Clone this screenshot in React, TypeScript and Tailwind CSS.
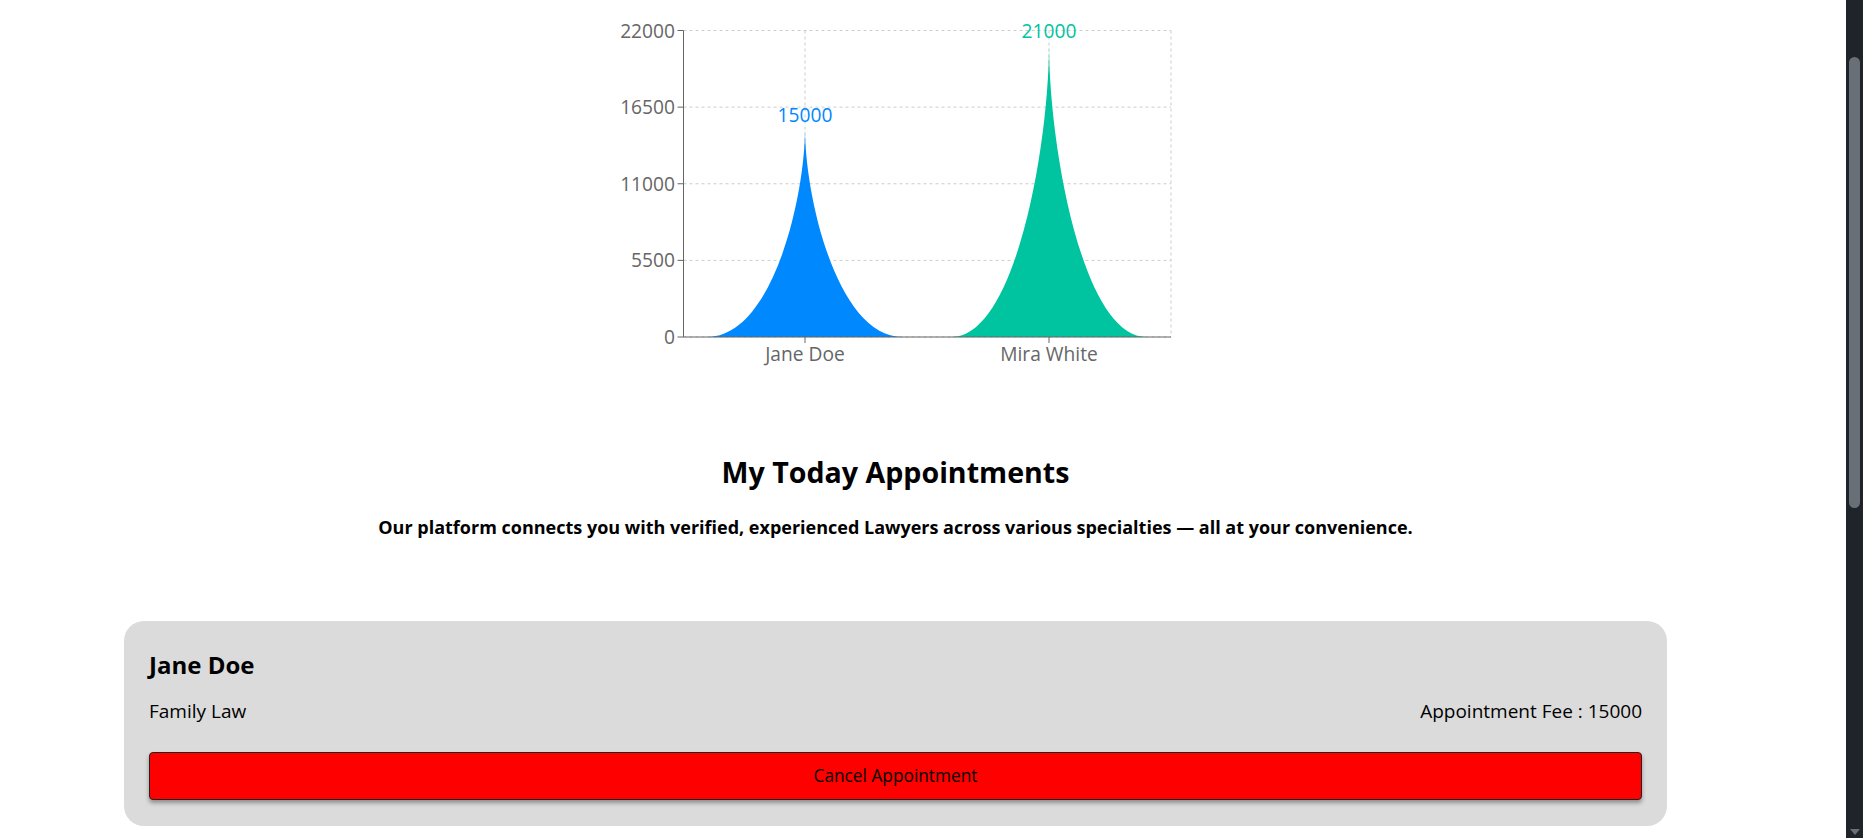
import React from "react";

const OX = 605;
const FONT = '"Open Sans", "Noto Sans", sans-serif';

function Chart() {
  const x0 = 682.5 - OX;
  const x1 = 1170 - OX;
  const yTop = 30.5;
  const yBot = 337;
  const ticks = [0, 5500, 11000, 16500, 22000];
  const yOf = (v: number) => yBot - (v / 22000) * (yBot - yTop);
  const bars = [
    { name: "Jane Doe", v: 15000, c: "#0088FE", cx: 804 - OX },
    { name: "Mira White", v: 21000, c: "#00C49F", cx: 1048 - OX },
  ];
  const bw = 195.2;
  const shape = (cx: number, v: number) => {
    const x = cx - bw / 2;
    const y = yOf(v);
    const h = yBot - y;
    const w = bw;
    return `M${x},${y + h}C${x + w / 3},${y + h} ${x + w / 2},${y + h / 3} ${x + w / 2},${y}C${x + w / 2},${y + h / 3} ${x + (2 * w) / 3},${y + h} ${x + w},${y + h}Z`;
  };
  return (
    <svg width={580} height={380} viewBox="0 0 580 380" style={{ fontFamily: FONT }}>
      {ticks.map((t) => (
        <line key={"h" + t} x1={x0} x2={x1} y1={yOf(t)} y2={yOf(t)} stroke="#ccc" strokeDasharray="3 3" />
      ))}
      {[...bars.map((b) => b.cx), x1].map((x, i) => (
        <line key={"v" + i} x1={x} x2={x} y1={yTop} y2={yBot} stroke="#ccc" strokeDasharray="3 3" />
      ))}
      {bars.map((b) => (
        <path key={b.name} d={shape(b.cx, b.v)} fill={b.c} />
      ))}
      <line x1={x0} x2={x0} y1={yTop} y2={yBot} stroke="#666" />
      <line x1={x0} x2={x1} y1={yBot} y2={yBot} stroke="#666" />
      {ticks.map((t) => (
        <g key={"t" + t}>
          <line x1={x0 - 6} x2={x0} y1={yOf(t)} y2={yOf(t)} stroke="#666" />
          <text x={674 - OX} y={yOf(t) + 7} textAnchor="end" fill="#666" fontSize={19.2}>
            {t}
          </text>
        </g>
      ))}
      {bars.map((b) => (
        <g key={"x" + b.name}>
          <line x1={b.cx} x2={b.cx} y1={yBot} y2={yBot + 6} stroke="#666" />
          <text x={b.cx} y={361} textAnchor="middle" fill="#666" fontSize={19.2}>
            {b.name}
          </text>
          <text x={b.cx} y={yOf(b.v) - 6} textAnchor="middle" fill={b.c} fontSize={19.2}>
            {b.v}
          </text>
        </g>
      ))}
    </svg>
  );
}

export default function App() {
  return (
    <div className="flex w-full h-[838px] overflow-hidden bg-white" style={{ fontFamily: FONT }}>
      <div className="w-[1846px] shrink-0">
        <div className="w-[1791px] flex flex-col items-center">
          <Chart />
          <h2 className="mt-[74px] text-[28.6px] leading-[36px] font-bold text-black">My Today Appointments</h2>
          <p className="mt-[23px] text-[18px] leading-[28px] font-bold text-black">
            Our platform connects you with verified, experienced Lawyers across various specialties — all at your convenience.
          </p>
          <div className="mt-[80px] w-[1543px] rounded-[20px] bg-[#dbdbdb] px-[25px] pt-[28px] pb-[26px]">
            <h3 className="text-[24px] leading-[32px] font-bold text-black">Jane Doe</h3>
            <div className="mt-[16px] flex justify-between text-[19px] leading-[28px] text-black">
              <span>Family Law</span>
              <span>Appointment Fee : 15000</span>
            </div>
            <button className="mt-[27px] w-full h-[48px] rounded-[4px] border border-[#222] bg-[#ff0000] text-[17.3px] font-medium text-black shadow-[0_3px_4px_rgba(0,0,0,0.35)]">
              Cancel Appointment
            </button>
          </div>
        </div>
      </div>
      <div className="w-[17px] shrink-0 bg-[#1f232a] flex flex-col items-center">
        <div className="mt-[57px] w-[11px] h-[451px] rounded-full bg-[#686f77]" />
        <div className="mt-auto mb-[3px] w-0 h-0 border-l-[5px] border-r-[5px] border-t-[6px] border-l-transparent border-r-transparent border-t-[#686f77]" />
      </div>
    </div>
  );
}
